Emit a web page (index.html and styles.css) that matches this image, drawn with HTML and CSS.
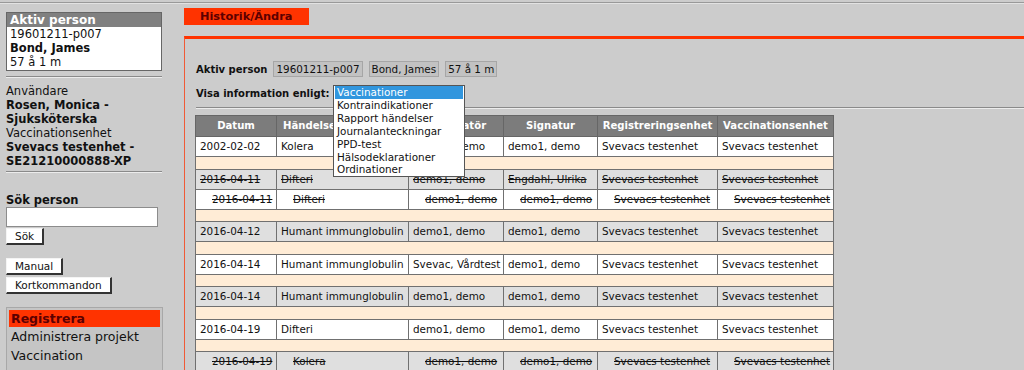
FILE: index.html
```html
<!DOCTYPE html>
<html lang="sv">
<head>
    <meta charset="UTF-8">
    <title>Historik/Ändra</title>
    <link rel="stylesheet" href="styles.css">
</head>
<body>
    <div class="topline"></div>

    <div class="layout">
        <div class="sidebar">
            <div class="person-box">
                <div class="person-head">Aktiv person</div>
                <div class="person-body">
                    <div>19601211-p007</div>
                    <div class="bold">Bond, James</div>
                    <div>57 å 1 m</div>
                </div>
            </div>

            <div class="rule side-rule"></div>

            <div class="user-info">
                <div>Användare</div>
                <div class="bold">Rosen, Monica -</div>
                <div class="bold">Sjuksköterska</div>
                <div>Vaccinationsenhet</div>
                <div class="bold">Svevacs testenhet -</div>
                <div class="bold">SE21210000888-XP</div>
            </div>

            <div class="rule side-rule2"></div>

            <div class="search">
                <div class="bold">Sök person</div>
                <input type="text" class="search-input">
                <button class="btn">Sök</button>
            </div>

            <div class="tools">
                <button class="btn">Manual</button>
                <button class="btn">Kortkommandon</button>
            </div>

            <div class="menu">
                <div class="menu-item active">Registrera</div>
                <div class="menu-item">Administrera projekt</div>
                <div class="menu-item">Vaccination</div>
            </div>
        </div>

        <div class="main">
            <div class="tab">Historik/Ändra</div>

            <div class="content">
                <div class="active-row">
                    <span class="label">Aktiv person</span>
                    <span class="field">19601211-p007</span>
                    <span class="field">Bond, James</span>
                    <span class="field">57 å 1 m</span>
                </div>

                <div class="visa-row">
                    <span class="label">Visa information enligt:</span>
                    <div class="dropdown">
                        <div class="option selected">Vaccinationer</div>
                        <div class="option">Kontraindikationer</div>
                        <div class="option">Rapport händelser</div>
                        <div class="option">Journalanteckningar</div>
                        <div class="option">PPD-test</div>
                        <div class="option">Hälsodeklarationer</div>
                        <div class="option">Ordinationer</div>
                    </div>
                </div>

                <div class="rule main-rule"></div>

                <table class="history">
                    <colgroup>
                        <col class="c-datum">
                        <col class="c-handelse">
                        <col class="c-vacc">
                        <col class="c-sign">
                        <col class="c-reg">
                        <col class="c-enhet">
                    </colgroup>
                    <tr>
                        <th>Datum</th>
                        <th class="left">Händelse</th>
                        <th>Vaccinatör</th>
                        <th>Signatur</th>
                        <th>Registreringsenhet</th>
                        <th>Vaccinationsenhet</th>
                    </tr>
                    <tr class="white">
                        <td>2002-02-02</td>
                        <td>Kolera</td>
                        <td>demo1, demo</td>
                        <td>demo1, demo</td>
                        <td>Svevacs testenhet</td>
                        <td>Svevacs testenhet</td>
                    </tr>
                    <tr class="spacer"><td colspan="6"></td></tr>
                    <tr class="grey removed">
                        <td>2016-04-11</td>
                        <td>Difteri</td>
                        <td>demo1, demo</td>
                        <td>Engdahl, Ulrika</td>
                        <td>Svevacs testenhet</td>
                        <td>Svevacs testenhet</td>
                    </tr>
                    <tr class="white removed sub">
                        <td>2016-04-11</td>
                        <td>Difteri</td>
                        <td>demo1, demo</td>
                        <td>demo1, demo</td>
                        <td>Svevacs testenhet</td>
                        <td>Svevacs testenhet</td>
                    </tr>
                    <tr class="spacer"><td colspan="6"></td></tr>
                    <tr class="grey">
                        <td>2016-04-12</td>
                        <td>Humant immunglobulin</td>
                        <td>demo1, demo</td>
                        <td>demo1, demo</td>
                        <td>Svevacs testenhet</td>
                        <td>Svevacs testenhet</td>
                    </tr>
                    <tr class="spacer"><td colspan="6"></td></tr>
                    <tr class="white">
                        <td>2016-04-14</td>
                        <td>Humant immunglobulin</td>
                        <td>Svevac, Vårdtest</td>
                        <td>demo1, demo</td>
                        <td>Svevacs testenhet</td>
                        <td>Svevacs testenhet</td>
                    </tr>
                    <tr class="spacer"><td colspan="6"></td></tr>
                    <tr class="grey">
                        <td>2016-04-14</td>
                        <td>Humant immunglobulin</td>
                        <td>demo1, demo</td>
                        <td>demo1, demo</td>
                        <td>Svevacs testenhet</td>
                        <td>Svevacs testenhet</td>
                    </tr>
                    <tr class="spacer"><td colspan="6"></td></tr>
                    <tr class="white">
                        <td>2016-04-19</td>
                        <td>Difteri</td>
                        <td>demo1, demo</td>
                        <td>demo1, demo</td>
                        <td>Svevacs testenhet</td>
                        <td>Svevacs testenhet</td>
                    </tr>
                    <tr class="spacer"><td colspan="6"></td></tr>
                    <tr class="grey removed sub">
                        <td>2016-04-19</td>
                        <td>Kolera</td>
                        <td>demo1, demo</td>
                        <td>demo1, demo</td>
                        <td>Svevacs testenhet</td>
                        <td>Svevacs testenhet</td>
                    </tr>
                </table>
            </div>
        </div>
    </div>
</body>
</html>
```

FILE: styles.css
```css
body {
    margin: 0;
    background: #cccccc;
    font-family: "DejaVu Sans", Verdana, sans-serif;
    color: #111;
}

.bold {
    font-weight: bold;
}

.topline {
    margin-top: 2px;
    height: 1px;
    background: #999;
    border-bottom: 1px solid #e2e2e2;
}

.layout {
    display: flex;
    align-items: flex-start;
}

.rule {
    border-top: 1px solid #8a8a8a;
    border-bottom: 1px solid #ececec;
}

/* left column */
.sidebar {
    flex: none;
    width: 157px;
    padding: 8px 0 0 6px;
    margin-right: 21px;
    font-size: 11.5px;
}

.person-box {
    width: 154px;
    border: 1px solid #666;
    background: #fff;
}

.person-head {
    background: #808080;
    color: #fff;
    font-weight: bold;
    font-size: 12px;
    height: 14px;
    line-height: 14px;
    padding-left: 3px;
}

.person-body {
    padding: 0 0 1px 3px;
    line-height: 14px;
}

.side-rule {
    width: 156px;
    margin-top: 5px;
}

.user-info {
    margin-top: 6px;
    line-height: 14px;
}

.side-rule2 {
    width: 156px;
    margin-top: 3px;
}

.search {
    margin-top: 20px;
    line-height: 14px;
}

.search-input {
    display: block;
    box-sizing: border-box;
    width: 152px;
    height: 20px;
    margin: 0 0 1px;
    border: 1px solid #8c8c8c;
    background: #fff;
}

.btn {
    display: block;
    height: 17px;
    padding: 0 8px;
    background: #fff;
    border: 1px solid #f4f4f4;
    border-right: 2px solid #333;
    border-bottom: 2px solid #333;
    font-family: "DejaVu Sans", Verdana, sans-serif;
    font-size: 10.5px;
    color: #111;
    line-height: 13px;
}

.tools {
    margin-top: 13px;
}

.tools .btn + .btn {
    margin-top: 2px;
}

.menu {
    margin-top: 13px;
    width: 151px;
    padding: 2px;
    border: 1px solid #a8a8a8;
    background: #c5c5c5;
    font-size: 12.5px;
    height: 80px;
}

.menu-item {
    line-height: 19px;
    padding-left: 2px;
}

.menu-item.active {
    background: #ff3300;
    color: #5c0000;
    font-weight: bold;
    line-height: 17px;
}

/* right column */
.main {
    flex: 1;
    padding-top: 4px;
    font-size: 10.4px;
}

.tab {
    box-sizing: border-box;
    width: 125px;
    height: 17px;
    line-height: 17px;
    padding-left: 16px;
    background: #ff3300;
    color: #5c0000;
    font-weight: bold;
    font-size: 11.3px;
}

.content {
    margin-top: 11px;
    border-top: 3px solid #ff3300;
    border-left: 1px solid #f05a36;
    padding: 22px 0 0 11px;
    min-height: 320px;
}

.label {
    font-weight: bold;
    font-size: 10px;
}

.active-row {
    display: flex;
    align-items: center;
    gap: 6px;
    height: 16px;
}

.field {
    background: #c2c2c2;
    border: 1px solid #a6a6a6;
    padding: 0 2px;
    line-height: 14px;
}

.visa-row {
    position: relative;
    margin-top: 9px;
    line-height: 14px;
}

.dropdown {
    position: absolute;
    left: 137px;
    top: -1px;
    z-index: 2;
    width: 128px;
    padding: 0 1px;
    border: 1px solid #555;
    background: #fff;
    line-height: 12.9px;
}

.option {
    padding-left: 2px;
    color: #111;
}

.option.selected {
    background: #3196de;
    color: #fff;
}

.main-rule {
    margin-top: 6px;
}

.history {
    margin-top: 6px;
    margin-left: -1px;
    width: 638px;
    table-layout: fixed;
    border-collapse: collapse;
    border: 1px solid #666;
}

.c-datum { width: 81px; }
.c-handelse { width: 132px; }
.c-vacc { width: 95px; }
.c-sign { width: 94px; }
.c-reg { width: 120px; }
.c-enhet { width: 116px; }

.history th {
    background: #7c7c7c;
    color: #fff;
    font-size: 10.1px;
    padding: 4px 1px;
    line-height: 12px;
    border: 1px solid #666;
    white-space: nowrap;
}

.history th.left {
    text-align: left;
    padding-left: 6px;
}

.history td {
    padding: 3px 4px;
    line-height: 13px;
    border: 1px solid #707070;
    white-space: nowrap;
    overflow: hidden;
}

.history tr.white td {
    background: #fff;
}

.history tr.grey td {
    background: #dfdfdf;
}

.history tr.spacer td {
    background: #ffecd6;
    height: 11.5px;
    padding: 0;
}

.history tr.removed td {
    text-decoration: line-through;
}

.history tr.sub td {
    padding-left: 16px;
}
```
